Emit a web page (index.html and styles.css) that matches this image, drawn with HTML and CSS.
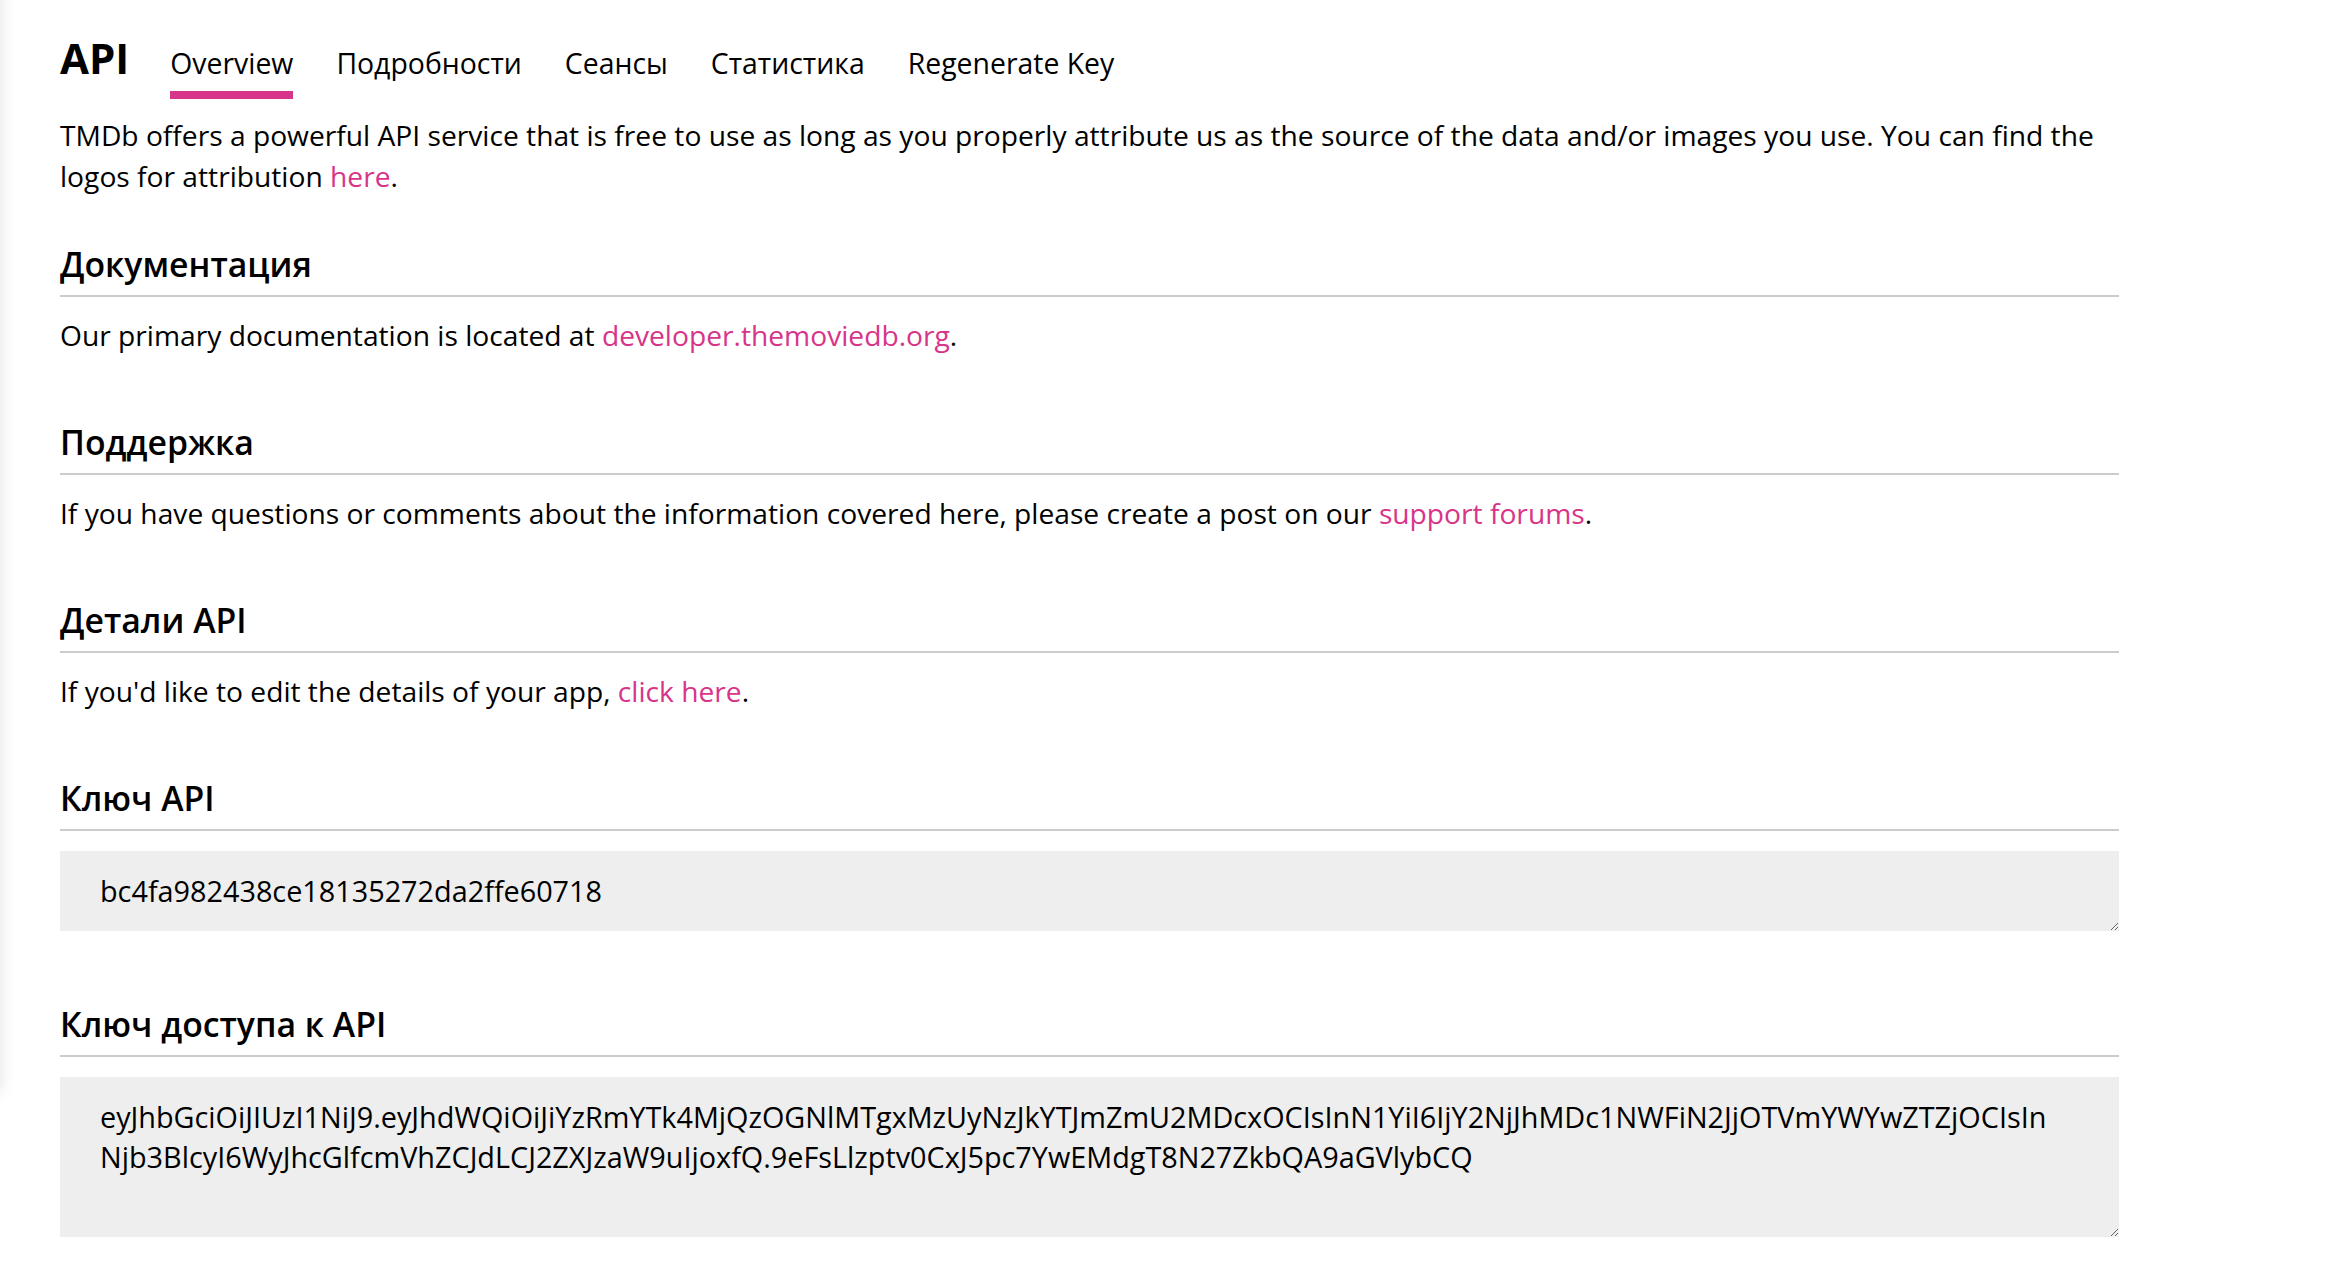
FILE: index.html
```html
<!DOCTYPE html>
<html lang="ru">
<head>
<meta charset="utf-8">
<title>API</title>
<link rel="stylesheet" href="styles.css">
</head>
<body>
<div class="edge-shadow"></div>
<main class="page">
  <header class="header">
    <h2 class="title">API</h2>
    <nav class="tabs">
      <a class="tab active" href="#">Overview</a>
      <a class="tab" href="#">Подробности</a>
      <a class="tab" href="#">Сеансы</a>
      <a class="tab" href="#">Статистика</a>
      <a class="tab" href="#">Regenerate Key</a>
    </nav>
  </header>

  <p class="intro">TMDb offers a powerful API service that is free to use as long as you properly attribute us as the source of the data and/or images you use. You can find the logos for attribution <a class="link" href="#">here</a>.</p>

  <section class="section">
    <h3 class="section-title">Документация</h3>
    <p class="text">Our primary documentation is located at <a class="link" href="#">developer.themoviedb.org</a>.</p>
  </section>

  <section class="section">
    <h3 class="section-title">Поддержка</h3>
    <p class="text">If you have questions or comments about the information covered here, please create a post on our <a class="link" href="#">support forums</a>.</p>
  </section>

  <section class="section">
    <h3 class="section-title">Детали API</h3>
    <p class="text">If you'd like to edit the details of your app, <a class="link" href="#">click here</a>.</p>
  </section>

  <section class="section">
    <h3 class="section-title">Ключ API</h3>
    <textarea class="key key-short" readonly>bc4fa982438ce18135272da2ffe60718</textarea>
  </section>

  <section class="section section-last">
    <h3 class="section-title">Ключ доступа к API</h3>
    <textarea class="key key-long" readonly>eyJhbGciOiJIUzI1NiJ9.eyJhdWQiOiJiYzRmYTk4MjQzOGNlMTgxMzUyNzJkYTJmZmU2MDcxOCIsInN1YiI6IjY2NjJhMDc1NWFiN2JjOTVmYWYwZTZjOCIsIn
Njb3BlcyI6WyJhcGlfcmVhZCJdLCJ2ZXJzaW9uIjoxfQ.9eFsLlzptv0CxJ5pc7YwEMdgT8N27ZkbQA9aGVlybCQ</textarea>
  </section>
</main>
</body>
</html>
```

FILE: styles.css
```css
html, body {
  margin: 0;
  padding: 0;
  background: #fff;
}

body {
  font-family: "Open Sans", "Noto Sans", sans-serif;
  color: #000;
  font-size: 28.2px;
  line-height: 40px;
}

.edge-shadow {
  position: fixed;
  left: -20px;
  top: -20px;
  width: 20px;
  height: 1112px;
  box-shadow: 0 0 16px rgba(0, 0, 0, 0.12);
}

.page {
  width: 2059px;
  padding: 37px 0 40px 60px;
}

.header {
  display: flex;
  align-items: baseline;
  gap: 41px;
}

.title {
  margin: 0;
  font-size: 42px;
  line-height: 42px;
  font-weight: 700;
}

.tabs {
  display: flex;
  align-items: baseline;
  gap: 43px;
}

.tab {
  font-size: 28.4px;
  line-height: 34px;
  color: #000;
  text-decoration: none;
  padding-bottom: 11px;
  border-bottom: 8px solid transparent;
}

.tab.active {
  border-bottom-color: #d7358a;
}

.intro {
  margin: 16px 0 0;
  line-height: 41px;
}

.link {
  color: #d7358a;
  text-decoration: none;
}

.section {
  margin-top: 67px;
}

.section:first-of-type {
  margin-top: 47px;
}

.section-title {
  margin: 0;
  font-size: 33.8px;
  line-height: 40px;
  font-weight: 600;
  padding-bottom: 11px;
  border-bottom: 2px solid #cccccc;
}

.text {
  margin: 18px 0 0;
}

.key {
  display: block;
  box-sizing: border-box;
  width: 100%;
  margin: 20px 0 0;
  padding: 20px 40px;
  border: none;
  outline: none;
  background: #eeeeee;
  color: #000;
  font-family: inherit;
  font-size: 28.8px;
  line-height: 40px;
  white-space: pre-wrap;
  overflow: hidden;
}

.key-short {
  height: 80px;
}

.key-long {
  height: 160px;
}

.section-last {
  margin-top: 73px;
}
```
